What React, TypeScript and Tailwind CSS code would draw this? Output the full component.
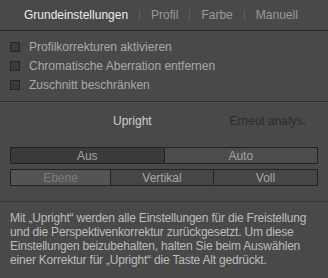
import React from 'react';

const TABS = ['Grundeinstellungen', 'Profil', 'Farbe', 'Manuell'];
const CHECKS = ['Profilkorrekturen aktivieren', 'Chromatische Aberration entfernen', 'Zuschnitt beschränken'];

const App: React.FC = () => {
  return (
    <div
      className="w-[328px] h-[278px] bg-[#494949] text-[12px] overflow-hidden"
      style={{ fontFamily: '"Liberation Sans", Arial, sans-serif' }}
    >
      {/* Tabs */}
      <div className="h-[31px] flex items-center pl-[24px] border-b border-[#2a2a2a]">
        {TABS.map((tab, i) => (
          <div key={tab} className="flex items-center">
            {i > 0 && <span className="w-px h-[11px] bg-[#5c5c5c] mx-[11px]" />}
            <span className={i === 0 ? 'text-[#ececec]' : 'text-[#999999]'}>{tab}</span>
          </div>
        ))}
      </div>

      {/* Checkboxes */}
      <div className="pt-[6px] pb-[7px] pl-[10px] border-b border-[#2f2f2f] shadow-[0_1px_0_#535353]">
        {CHECKS.map(label => (
          <div key={label} className="h-[19px] flex items-center gap-[9px]">
            <span className="w-[10px] h-[10px] bg-[#3a3a3a] border border-[#262626]" />
            <span className="text-[#a9a9a9]">{label}</span>
          </div>
        ))}
      </div>

      {/* Upright */}
      <div className="h-[36px] flex items-center mt-[1px]">
        <span className="ml-[113px] text-[#cfcfcf]">Upright</span>
        <span className="ml-auto mr-[22px] text-[#2c2c2c]">Erneut analys.</span>
      </div>

      {/* Segmented buttons */}
      <div className="mt-[8px] px-[10px] flex flex-col gap-[5px]">
        <div className="flex h-[17px] border border-[#222222]">
          <div className="flex-1 bg-[#3a3a3a] flex items-center justify-center text-[#a3a3a3] border-r border-[#222222]">Aus</div>
          <div className="flex-1 bg-[#4c4c4c] flex items-center justify-center text-[#a3a3a3]">Auto</div>
        </div>
        <div className="flex h-[17px] border border-[#222222]">
          <div className="w-[100px] bg-[#545454] flex items-center justify-center text-[#7c7c7c] border-r border-[#222222]">Ebene</div>
          <div className="w-[103px] bg-[#464646] flex items-center justify-center text-[#a8a8a8] border-r border-[#222222]">Vertikal</div>
          <div className="flex-1 bg-[#464646] flex items-center justify-center text-[#a8a8a8]">Voll</div>
        </div>
      </div>

      {/* Info */}
      <div className="mt-[15px] border-t border-[#383838] pt-[9px] pl-[10px] pr-[4px] leading-[14px] tracking-[-0.2px] text-[#bdbdbd]">
        Mit „Upright“ werden alle Einstellungen für die Freistellung und die Perspektivenkorrektur zurückgesetzt. Um diese Einstellungen beizubehalten, halten Sie beim Auswählen einer Korrektur für „Upright“ die Taste Alt gedrückt.
      </div>
    </div>
  );
};

export default App;
